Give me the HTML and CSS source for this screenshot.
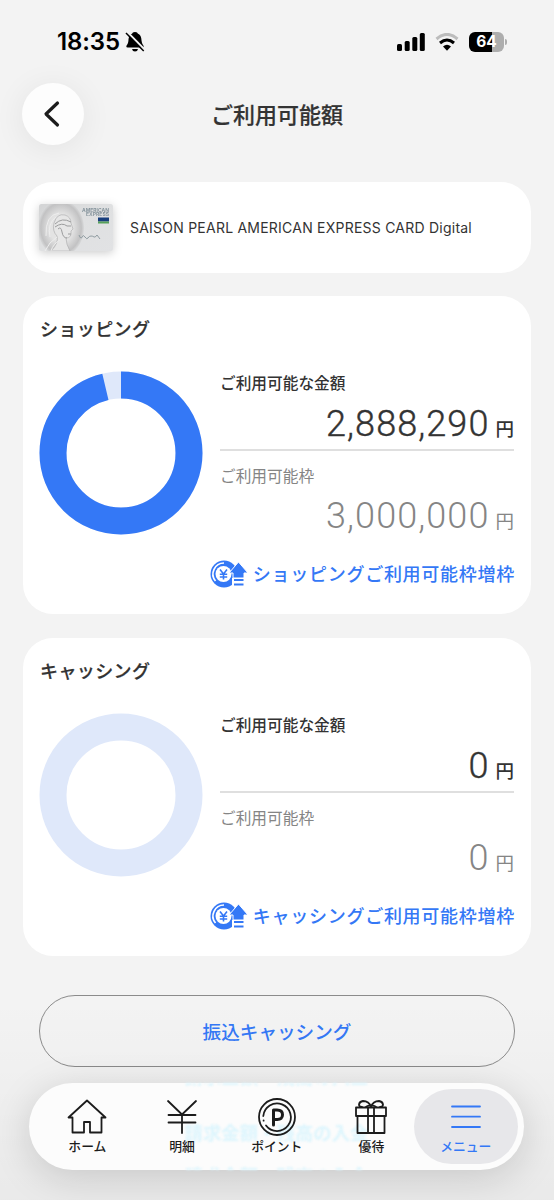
FILE: index.html
```html
<!DOCTYPE html>
<html lang="ja">
<head>
  <meta charset="UTF-8">
  <meta name="viewport" content="width=device-width, initial-scale=1.0">
  <title>ご利用可能額</title>
  <link rel="stylesheet" href="styles.css">
</head>
<body>
  <div class="status-bar">
    <div class="status-left">
      <span class="clock">18:35</span>
      <svg class="bell" viewBox="0 0 20 22" width="20" height="22">
        <path d="M10 1C12 1 12.5 2 13 2.7C16 4 16.4 7 16.6 10C16.8 13 18.7 14.2 18.7 15.5Q18.7 16.5 17.3 16.5H2.7Q1.3 16.5 1.3 15.5C1.3 14.2 3.2 13 3.4 10C3.6 7 4 4 7 2.7C7.5 2 8 1 10 1Z"/>
        <path d="M7 18H13Q12.5 20.5 10 20.5Q7.5 20.5 7 18Z"/>
        <path d="M2.8 1.5L20 19" stroke="#f3f3f3" stroke-width="2"/>
        <path d="M1 2L18.7 20" stroke="#000" stroke-width="1.5"/>
      </svg>
    </div>
    <div class="status-right">
      <svg viewBox="0 0 28 18" width="28" height="18">
        <rect x="0" y="11" width="5" height="7" rx="1.5"/>
        <rect x="7.7" y="8" width="5" height="10" rx="1.5"/>
        <rect x="15.3" y="4" width="5" height="14" rx="1.5"/>
        <rect x="22.8" y="0" width="5" height="18" rx="1.5"/>
      </svg>
      <svg class="wifi" viewBox="0 0 24 18" width="24" height="18" fill="none">
        <path d="M1.5 6Q12-3.2 22.5 6" stroke="#bcbcbc" stroke-width="3"/>
        <path d="M5 10Q12 4 19 10" stroke="#000" stroke-width="3"/>
        <path d="M8 13.5Q12 10 16 13.5L12 17.7Z" fill="#000"/>
      </svg>
      <div class="battery"><span>64</span></div>
    </div>
  </div>

  <header class="header">
    <button class="back" aria-label="戻る">
      <svg viewBox="0 0 18 28" width="18" height="28" fill="none" stroke="#1c1c1c" stroke-width="3.2" stroke-linecap="round" stroke-linejoin="round">
        <path d="M14.5 3L3 14L14.5 25"/>
      </svg>
    </button>
    <h1>ご利用可能額</h1>
  </header>

  <main>
    <section class="card card-info">
      <svg class="card-art" viewBox="0 0 74 47" width="74" height="47">
        <defs>
          <linearGradient id="silver" x1="0" y1="0" x2="1" y2="1">
            <stop offset="0" stop-color="#d3d4d5"/>
            <stop offset=".45" stop-color="#dfe0e1"/>
            <stop offset="1" stop-color="#e1e2e4"/>
          </linearGradient>
          <radialGradient id="medal">
            <stop offset=".5" stop-color="#e3e3e3"/>
            <stop offset=".88" stop-color="#c2c2c3"/>
            <stop offset="1" stop-color="#d8d9da"/>
          </radialGradient>
          <clipPath id="edge"><rect width="74" height="47" rx="2.5"/></clipPath>
        </defs>
        <g clip-path="url(#edge)">
          <rect width="74" height="47" fill="url(#silver)"/>
          <ellipse cx="22" cy="24" rx="23" ry="28" fill="url(#medal)"/>
          <path d="M12 47Q20 39 18 32Q13 27 15 19Q18 9 26 11Q32 13 32 19L34 25L32 27Q33 34 27 34Q27 40 31 47Z" fill="#e6e6e6" stroke="#b0b0b1" stroke-width=".7"/>
          <path d="M16 20Q23 13 32 18M16 23Q23 18 28 22M19 25Q22 22 23 28Q24 34 28 34M28 22L32 22M29 30H32" fill="none" stroke="#9b9c9d" stroke-width="1"/>
          <path d="M17 13Q8 20 11 33M20 9Q6 11 7 32M18 33Q10 38 6 47M21 36Q14 40 12 47" fill="none" stroke="#ededed" stroke-width="1"/>
          <text x="43" y="7.5" textLength="27" lengthAdjust="spacingAndGlyphs">AMERICAN</text>
          <text x="47" y="12" textLength="23" lengthAdjust="spacingAndGlyphs">EXPRESS</text>
          <rect x="59" y="13.5" width="11" height="4" fill="#173e7d"/>
          <rect x="59" y="17.5" width="11" height="2" fill="#56a05a"/>
          <path d="M40 31Q42 36 43 33T46 33T49 34T52 32T55 33T58 31L61 35" fill="none" stroke="#919da2" stroke-width="1"/>
        </g>
      </svg>
      <span class="card-name">SAISON PEARL AMERICAN EXPRESS CARD Digital</span>
    </section>

    <section class="card limit">
      <h2>ショッピング</h2>
      <div class="limit-body">
        <svg class="donut" viewBox="0 0 164 164" width="164" height="164">
          <circle class="ring" cx="82" cy="82" r="68"/>
          <circle class="ring used" cx="82" cy="82" r="68" pathLength="100" stroke-dasharray="96.3 3.7"/>
        </svg>
        <div class="figures">
          <div class="label">ご利用可能な金額</div>
          <div class="amount"><span class="num">2,888,290</span><span class="yen">円</span></div>
          <div class="label sub">ご利用可能枠</div>
          <div class="amount sub"><span class="num">3,000,000</span><span class="yen">円</span></div>
        </div>
      </div>
      <a class="increase" href="#">
        <svg viewBox="0 0 38 28" width="38" height="28">
          <circle cx="14" cy="14" r="13.5"/>
          <path d="M14 3A11 11 0 0 0 5.5 21" fill="none" stroke="#fff" stroke-width="1.7"/>
          <circle cx="13.5" cy="14" r="8" fill="#fff"/>
          <path d="M10 9.5L13.5 14L17 9.5M9.8 14.2H17.2M9.8 17H17.2M13.5 14V19.5" fill="none" stroke="#3478f6" stroke-width="1.6"/>
          <path d="M28.5 2L38 13H34V18H23V13H19Z" stroke="#fff" stroke-width="1"/>
          <path d="M22 18H36V28H22Z" fill="#fff"/>
          <path d="M24 20H33.5M24 24.5H33.5" fill="none" stroke="#3478f6" stroke-width="2"/>
        </svg>
        <span>ショッピングご利用可能枠増枠</span>
      </a>
    </section>

    <section class="card limit">
      <h2>キャッシング</h2>
      <div class="limit-body">
        <svg class="donut" viewBox="0 0 164 164" width="164" height="164">
          <circle class="ring" cx="82" cy="82" r="68"/>
        </svg>
        <div class="figures">
          <div class="label">ご利用可能な金額</div>
          <div class="amount"><span class="num">0</span><span class="yen">円</span></div>
          <div class="label sub">ご利用可能枠</div>
          <div class="amount sub"><span class="num">0</span><span class="yen">円</span></div>
        </div>
      </div>
      <a class="increase" href="#">
        <svg viewBox="0 0 38 28" width="38" height="28">
          <circle cx="14" cy="14" r="13.5"/>
          <path d="M14 3A11 11 0 0 0 5.5 21" fill="none" stroke="#fff" stroke-width="1.7"/>
          <circle cx="13.5" cy="14" r="8" fill="#fff"/>
          <path d="M10 9.5L13.5 14L17 9.5M9.8 14.2H17.2M9.8 17H17.2M13.5 14V19.5" fill="none" stroke="#3478f6" stroke-width="1.6"/>
          <path d="M28.5 2L38 13H34V18H23V13H19Z" stroke="#fff" stroke-width="1"/>
          <path d="M22 18H36V28H22Z" fill="#fff"/>
          <path d="M24 20H33.5M24 24.5H33.5" fill="none" stroke="#3478f6" stroke-width="2"/>
        </svg>
        <span>キャッシングご利用可能枠増枠</span>
      </a>
    </section>

    <button class="outline-btn">振込キャッシング</button>
  </main>

  <div class="tab-shade"></div>
  <nav class="tab-bar">
    <div class="see-through" aria-hidden="true">
      <span>請求金額・残高の入金</span>
      <span>請求金額・残高の入金</span>
      <span>請求金額・残高の入金</span>
    </div>
    <a class="tab" href="#">
      <svg viewBox="0 0 40 40" width="40" height="40">
        <path d="M20 3.5L1.5 20.5H5.5V35.5H17V25H23V35.5H34.5V20.5H38.5Z"/>
      </svg>
      <span>ホーム</span>
    </a>
    <a class="tab" href="#">
      <svg viewBox="0 0 40 40" width="40" height="40">
        <path d="M6 4L20 17.5L34 4M6.5 18H33.5M6.5 25.5H33.5M20 17.5V36"/>
      </svg>
      <span>明細</span>
    </a>
    <a class="tab" href="#">
      <svg viewBox="0 0 40 40" width="40" height="40">
        <circle cx="20" cy="20" r="18"/>
        <path d="M6.3 19A13.8 13.8 0 1 1 9 28.5M6.6 23.5V23.7"/>
        <path d="M16.5 28V13H20Q25.5 13 25.5 17.8T20 22.5H16.5" stroke-width="3"/>
      </svg>
      <span>ポイント</span>
    </a>
    <a class="tab" href="#">
      <svg viewBox="0 0 40 40" width="40" height="40">
        <path d="M5 10.5H35V19H5ZM6.5 19H33.5V36H6.5ZM17 10.5V36M23 10.5V36"/>
        <path d="M20 10Q18 4 12 4Q8.5 4.5 8 7.5Q8 10 11 10M20 10Q22 4 28 4Q31.5 4.5 32 7.5Q32 10 29 10M15 10Q17 8 20 9Q23 8 25 10"/>
      </svg>
      <span>優待</span>
    </a>
    <a class="tab active" href="#">
      <svg viewBox="0 0 40 40" width="40" height="40">
        <path d="M6 9.5H34M6 19.7H34M6 30H34"/>
      </svg>
      <span>メニュー</span>
    </a>
  </nav>
</body>
</html>
```
FILE: styles.css
```css
* {
  box-sizing: border-box;
  margin: 0;
  padding: 0;
}
body {
  width: 554px;
  height: 1200px;
  position: relative;
  overflow: hidden;
  background: #f3f3f3;
  color: #333;
  font-family: Inter, "Noto Sans CJK JP", sans-serif;
}
a {
  text-decoration: none;
}
button {
  font-family: inherit;
}
.status-bar {
  height: 83px;
  padding: 0 50px 0 57px;
  display: flex;
  align-items: center;
  justify-content: space-between;
  color: #000;
}
.status-left {
  display: flex;
  align-items: center;
  gap: 5px;
}
.clock {
  font-size: 24px;
  font-weight: 600;
  letter-spacing: -0.1px;
}
.status-right {
  display: flex;
  align-items: center;
  gap: 10px;
}
.battery {
  width: 35px;
  height: 20px;
  border-radius: 6px;
  background: linear-gradient(90deg, #000 65%, #adadad 65%);
  color: #fff;
  font-size: 15.5px;
  font-weight: 700;
  line-height: 20px;
  text-align: center;
  position: relative;
}
.battery::after {
  content: "";
  position: absolute;
  right: -3px;
  top: 7px;
  width: 2px;
  height: 6px;
  border-radius: 0 2px 2px 0;
  background: #adadad;
}
.header {
  height: 62px;
  padding: 0 22px;
  display: grid;
  grid-template-columns: 62px 1fr 62px;
  align-items: center;
}
.header h1 {
  padding-bottom: 2px;
  font-size: 22px;
  font-weight: 500;
  text-align: center;
  -webkit-text-stroke: 0.2px #333;
}
.back {
  width: 62px;
  height: 62px;
  padding-right: 3px;
  border: none;
  border-radius: 50%;
  background: #fdfdfd;
  box-shadow: 0 4px 32px rgba(0,0,0,0.07);
  display: flex;
  align-items: center;
  justify-content: center;
}
main {
  padding: 37px 23px 0;
  display: flex;
  flex-direction: column;
}
.card {
  background: #fff;
  border-radius: 30px;
}
.card-info {
  height: 91px;
  padding-left: 16px;
  display: flex;
  align-items: center;
  gap: 17px;
}
.card-art {
  filter: drop-shadow(0 2px 5px rgba(0,0,0,0.2));
}
.card-art text {
  font-family: Inter, sans-serif;
  font-size: 5px;
  font-weight: 700;
  fill: #87959d;
}
.card-name {
  font-size: 14px;
  letter-spacing: 0.23px;
}
.limit {
  height: 318px;
  margin-top: 23px;
  padding: 22px 16px 0;
}
.limit + .limit {
  margin-top: 24px;
}
.limit h2 {
  height: 24px;
  margin-bottom: 30px;
  padding-left: 1px;
  font-size: 18px;
  line-height: 24px;
  font-weight: 500;
  letter-spacing: 0.4px;
  -webkit-text-stroke: 0.2px #333;
}
.limit-body {
  display: flex;
  gap: 17px;
}
.donut {
  margin-top: -1px;
}
.ring {
  fill: none;
  stroke: #dfe8fa;
  stroke-width: 27;
}
.ring.used {
  stroke: #3478f6;
  transform: rotate(-90deg);
  transform-origin: center;
}
.figures {
  width: 294px;
}
.label {
  height: 24px;
  font-size: 15.7px;
  line-height: 24px;
  font-weight: 500;
}
.label.sub {
  margin-top: 13px;
  line-height: 26px;
  color: #858585;
  font-weight: 400;
}
.amount {
  height: 55px;
  display: flex;
  justify-content: flex-end;
  align-items: baseline;
  gap: 6px;
  line-height: 56px;
  border-bottom: 2px solid #dfdfdf;
}
.amount.sub {
  height: 54px;
  border-bottom: none;
  color: #858585;
}
.num {
  font-family: Roboto, sans-serif;
  font-size: 36px;
  font-weight: 300;
  letter-spacing: 1.1px;
  -webkit-text-stroke: 0.4px #333;
}
.sub .num {
  font-weight: 300;
  -webkit-text-stroke: 0;
}
.yen {
  font-size: 18.5px;
  font-weight: 500;
}
.sub .yen {
  font-weight: 400;
}
.increase {
  height: 28px;
  margin-top: 18px;
  display: flex;
  align-items: center;
  justify-content: flex-end;
  gap: 5px;
  color: #3478f6;
  font-size: 18px;
  font-weight: 500;
  letter-spacing: 0.73px;
}
.increase svg {
  fill: #3478f6;
}
.increase span {
  padding-bottom: 2px;
}
.outline-btn {
  height: 72px;
  margin: 39px 16px 0;
  padding-bottom: 2px;
  border: 1.5px solid #8b8b8b;
  border-radius: 36px;
  background: none;
  color: #3478f6;
  font-size: 18.6px;
  font-weight: 500;
}
.tab-shade {
  position: absolute;
  left: 0;
  right: 0;
  bottom: 0;
  height: 200px;
  background: linear-gradient(rgba(0,0,0,0), rgba(0,0,0,0.04));
}
.tab-bar {
  position: absolute;
  left: 29px;
  top: 1083px;
  width: 495px;
  height: 87px;
  padding: 6px 6px 6px 11px;
  border-radius: 44px;
  background: #fcfcfc;
  box-shadow: 0 8px 38px rgba(0,0,0,0.15);
  display: flex;
}
.see-through {
  position: absolute;
  inset: 0;
  overflow: hidden;
  border-radius: 44px;
  color: #dcf5fd;
  font-size: 18.4px;
  font-weight: 700;
  text-align: center;
  filter: blur(1px);
}
.see-through span {
  display: block;
  height: 49px;
  line-height: 24px;
}
.see-through span:first-child {
  margin-top: -18px;
  height: 56px;
}
.see-through span:last-child {
  margin-top: -6px;
}
.tab {
  width: 94.7px;
  display: flex;
  flex-direction: column;
  align-items: center;
  color: #1c1c1c;
  font-size: 12.8px;
  font-weight: 500;
  line-height: 20px;
  position: relative;
}
.tab svg {
  margin-top: 8px;
  fill: none;
  stroke: currentColor;
  stroke-width: 1.8;
  stroke-linejoin: round;
  stroke-linecap: round;
}
.tab.active {
  width: 104px;
  margin-left: -5px;
  border-radius: 38px;
  background: #e7e7ea;
  color: #3478f6;
}
```
